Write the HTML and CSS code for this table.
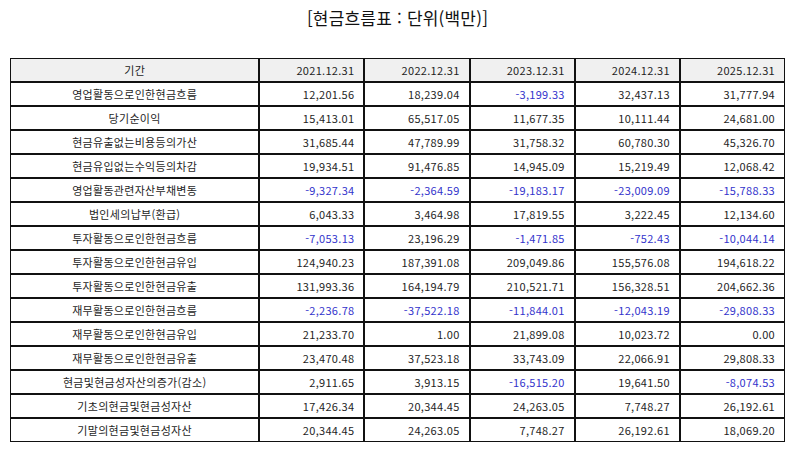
FILE: index.html
```html
<!DOCTYPE html>
<html lang="ko">
<head>
<meta charset="utf-8">
<link rel="stylesheet" href="styles.css">
</head>
<body>
<div class="page">
  <h1 class="title">[현금흐름표 : 단위(백만)]</h1>
  <table class="cf">
    <colgroup>
      <col class="c-label"><col class="c-num"><col class="c-num"><col class="c-num"><col class="c-num"><col class="c-num">
    </colgroup>
    <thead>
      <tr><th class="lbl">기간</th><th>2021.12.31</th><th>2022.12.31</th><th>2023.12.31</th><th>2024.12.31</th><th>2025.12.31</th></tr>
    </thead>
    <tbody>
      <tr><td class="lbl">영업활동으로인한현금흐름</td><td>12,201.56</td><td>18,239.04</td><td class="neg">-3,199.33</td><td>32,437.13</td><td>31,777.94</td></tr>
      <tr><td class="lbl">당기순이익</td><td>15,413.01</td><td>65,517.05</td><td>11,677.35</td><td>10,111.44</td><td>24,681.00</td></tr>
      <tr><td class="lbl">현금유출없는비용등의가산</td><td>31,685.44</td><td>47,789.99</td><td>31,758.32</td><td>60,780.30</td><td>45,326.70</td></tr>
      <tr><td class="lbl">현금유입없는수익등의차감</td><td>19,934.51</td><td>91,476.85</td><td>14,945.09</td><td>15,219.49</td><td>12,068.42</td></tr>
      <tr><td class="lbl">영업활동관련자산부채변동</td><td class="neg">-9,327.34</td><td class="neg">-2,364.59</td><td class="neg">-19,183.17</td><td class="neg">-23,009.09</td><td class="neg">-15,788.33</td></tr>
      <tr><td class="lbl">법인세의납부(환급)</td><td>6,043.33</td><td>3,464.98</td><td>17,819.55</td><td>3,222.45</td><td>12,134.60</td></tr>
      <tr><td class="lbl">투자활동으로인한현금흐름</td><td class="neg">-7,053.13</td><td>23,196.29</td><td class="neg">-1,471.85</td><td class="neg">-752.43</td><td class="neg">-10,044.14</td></tr>
      <tr><td class="lbl">투자활동으로인한현금유입</td><td>124,940.23</td><td>187,391.08</td><td>209,049.86</td><td>155,576.08</td><td>194,618.22</td></tr>
      <tr><td class="lbl">투자활동으로인한현금유출</td><td>131,993.36</td><td>164,194.79</td><td>210,521.71</td><td>156,328.51</td><td>204,662.36</td></tr>
      <tr><td class="lbl">재무활동으로인한현금흐름</td><td class="neg">-2,236.78</td><td class="neg">-37,522.18</td><td class="neg">-11,844.01</td><td class="neg">-12,043.19</td><td class="neg">-29,808.33</td></tr>
      <tr><td class="lbl">재무활동으로인한현금유입</td><td>21,233.70</td><td>1.00</td><td>21,899.08</td><td>10,023.72</td><td>0.00</td></tr>
      <tr><td class="lbl">재무활동으로인한현금유출</td><td>23,470.48</td><td>37,523.18</td><td>33,743.09</td><td>22,066.91</td><td>29,808.33</td></tr>
      <tr><td class="lbl">현금및현금성자산의증가(감소)</td><td>2,911.65</td><td>3,913.15</td><td class="neg">-16,515.20</td><td>19,641.50</td><td class="neg">-8,074.53</td></tr>
      <tr><td class="lbl">기초의현금및현금성자산</td><td>17,426.34</td><td>20,344.45</td><td>24,263.05</td><td>7,748.27</td><td>26,192.61</td></tr>
      <tr><td class="lbl">기말의현금및현금성자산</td><td>20,344.45</td><td>24,263.05</td><td>7,748.27</td><td>26,192.61</td><td>18,069.20</td></tr>
    </tbody>
  </table>
</div>
</body>
</html>
```

FILE: styles.css
```css
html, body {
  margin: 0;
  padding: 0;
  background: #ffffff;
}

.page {
  padding: 6px 9px 0 10px;
  font-family: "Noto Sans CJK KR", "Noto Sans", sans-serif;
  color: #1e1e1e;
}

.title {
  margin: 0;
  font-size: 17px;
  font-weight: 400;
  line-height: 24px;
  text-align: center;
  color: #111;
  letter-spacing: 0.2px;
}

.cf {
  margin-top: 28px;
  width: 775px;
  border-collapse: separate;
  border-spacing: 0;
  table-layout: fixed;
  font-size: 11px;
}

.c-label { width: 249px; }
.c-num { width: 105px; }

.cf th,
.cf td {
  border: 1px solid #111;
  padding: 0 9px 0 4px;
  line-height: 22px;
  height: 24px;
  box-sizing: border-box;
  text-align: right;
  font-weight: 400;
  white-space: nowrap;
  letter-spacing: 0.3px;
}

.cf thead th {
  background: #f0f0f0;
}

.cf .lbl {
  text-align: center;
  padding: 0 4px;
  letter-spacing: 0.3px;
}

.cf .neg {
  color: #3333cc;
}
```
